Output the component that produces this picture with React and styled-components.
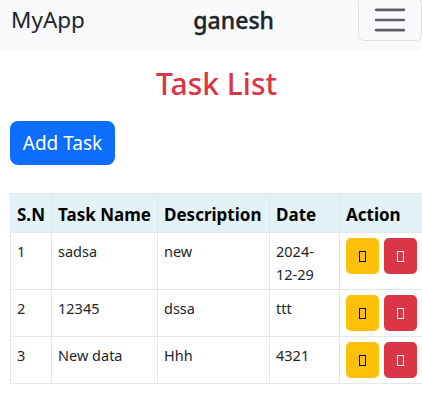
import React from "react";
import styled, { createGlobalStyle } from "styled-components";

const Global = createGlobalStyle`
  html, body { margin: 0; padding: 0; background: #fff; overflow: hidden; }
  body { font-family: "Noto Sans", "Open Sans", sans-serif; color: #212529; }
`;

const Page = styled.div`
  width: 422px;
  height: 418px;
  overflow: hidden;
`;

const Navbar = styled.nav`
  display: flex;
  align-items: flex-start;
  height: 50px;
  background: #f8f9fa;
  padding-left: 11px;
  box-sizing: border-box;
`;

const Brand = styled.span`
  font-size: 22.5px;
  line-height: 40px;
  color: #212529;
`;

const UserName = styled.span`
  margin-left: auto;
  margin-right: 84px;
  font-size: 23px;
  font-weight: 500;
  line-height: 40px;
  color: #212529;
  -webkit-text-stroke: 0.35px #212529;
`;

const Toggler = styled.button`
  flex: none;
  width: 64px;
  height: 43px;
  margin-top: -2px;
  padding: 0;
  border: 1px solid rgba(0, 0, 0, 0.1);
  border-radius: 6px;
  background: transparent;
  display: flex;
  align-items: center;
  justify-content: center;
`;

const Main = styled.main`
  padding: 0 10px;
`;

const Title = styled.h2`
  margin: 16px 0 0;
  text-align: center;
  padding-left: 11px;
  font-size: 30px;
  font-weight: 500;
  line-height: 1.2;
  color: #dc3545;
`;

const AddButton = styled.button`
  margin-top: 19px;
  height: 44px;
  width: 105px;
  padding: 0;
  border: none;
  border-radius: 8px;
  background: #0d6efd;
  color: #fff;
  font-family: inherit;
  font-size: 19px;
`;

const Table = styled.table`
  margin-top: 28px;
  border-collapse: collapse;
  table-layout: fixed;
  width: 416px;
  font-size: 14.5px;
  line-height: 23px;
`;

const Th = styled.th`
  background: #e3f2f5;
  border: 1px solid #e3e6ea;
  padding: 9px 6px 5px;
  text-align: left;
  font-size: 17px;
  font-weight: 700;
  line-height: 24px;
  white-space: nowrap;
  color: #000;
`;

const Td = styled.td`
  border: 1px solid #e3e6ea;
  padding: 7px 6px 3px;
  vertical-align: top;
  font-weight: 400;
  color: #212529;
`;

const ActionCell = styled(Td)`
  padding: 5px 0 5px 6px;
  white-space: nowrap;
`;

const IconButton = styled.button`
  width: 33px;
  height: 36px;
  padding: 0;
  margin-right: 5px;
  border: none;
  border-radius: 5px;
  background: ${(p) => (p.$variant === "danger" ? "#dc3545" : "#ffc107")};
  display: inline-flex;
  align-items: center;
  justify-content: center;
  vertical-align: top;
`;

const Tofu = styled.span`
  width: 5px;
  height: 9px;
  border: 1px solid ${(p) => p.$color};
`;

const HamburgerIcon = () => (
  <svg width="38" height="38" viewBox="0 0 30 30" aria-hidden="true">
    <path
      d="M4 7h22M4 15h22M4 23h22"
      stroke="rgba(33,37,41,0.72)"
      strokeWidth="2"
      strokeLinecap="round"
    />
  </svg>
);

const tasks = [
  { id: 1, name: "sadsa", desc: "new", date: "2024-12-29" },
  { id: 2, name: "12345", desc: "dssa", date: "ttt" },
  { id: 3, name: "New data", desc: "Hhh", date: "4321" },
];

export default function App() {
  return (
    <Page>
      <Global />
      <Navbar>
        <Brand>MyApp</Brand>
        <UserName>ganesh</UserName>
        <Toggler aria-label="Toggle navigation">
          <HamburgerIcon />
        </Toggler>
      </Navbar>
      <Main>
        <Title>Task List</Title>
        <AddButton>Add Task</AddButton>
        <Table>
          <colgroup>
            <col style={{ width: 41 }} />
            <col style={{ width: 106 }} />
            <col style={{ width: 112 }} />
            <col style={{ width: 70 }} />
            <col style={{ width: 87 }} />
          </colgroup>
          <thead>
            <tr>
              <Th>S.N</Th>
              <Th>Task Name</Th>
              <Th>Description</Th>
              <Th>Date</Th>
              <Th>Action</Th>
            </tr>
          </thead>
          <tbody>
            {tasks.map((t) => (
              <tr key={t.id}>
                <Td>{t.id}</Td>
                <Td>{t.name}</Td>
                <Td>{t.desc}</Td>
                <Td>{t.date === "2024-12-29" ? <>2024-<br />12-29</> : t.date}</Td>
                <ActionCell>
                  <IconButton aria-label="Edit">
                    <Tofu $color="#000" />
                  </IconButton>
                  <IconButton $variant="danger" aria-label="Delete">
                    <Tofu $color="#fff" />
                  </IconButton>
                </ActionCell>
              </tr>
            ))}
          </tbody>
        </Table>
      </Main>
    </Page>
  );
}
